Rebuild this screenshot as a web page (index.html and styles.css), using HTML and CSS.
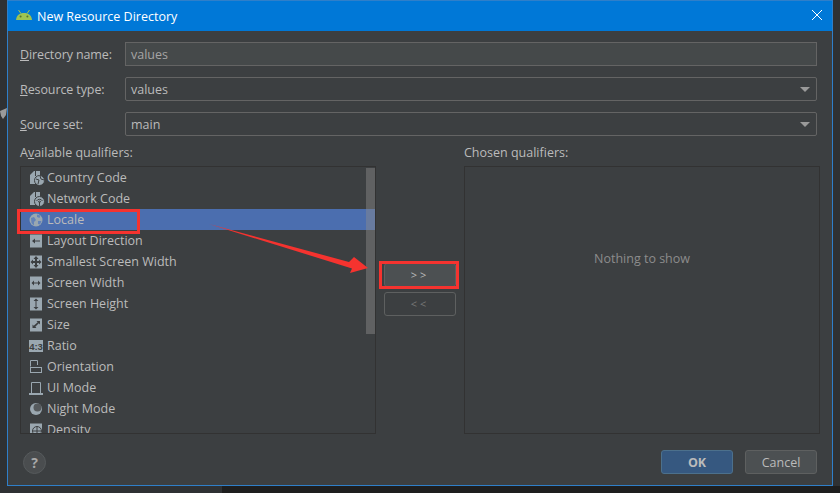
FILE: index.html
```html
<!DOCTYPE html>
<html lang="en">
<head>
    <meta charset="UTF-8">
    <meta name="viewport" content="width=device-width, initial-scale=1.0">
    <title>New Resource Directory</title>
    <link rel="stylesheet" href="styles.css">
</head>
<body>
    <!-- Bits of the desktop showing behind the dialog -->
    <div class="desk-dark"></div>
    <svg class="desk-cursor" width="8" height="12" viewBox="0 0 8 12">
        <path d="M0 3 L7 0 L6 7 L3 11 L1 8 Z" fill="#9a9a9a"/>
    </svg>

    <div class="dialog">
        <div class="titlebar">
            <svg class="android-icon" width="16" height="10" viewBox="0 0 16 10">
                <path d="M0 10 C0.3 5.500 3.500 3 8 3 C12.500 3 15.700 5.500 16 10 Z" fill="#9dc453"/>
                <path d="M2.500 0 L5 3.600 M13.500 0 L11 3.600" stroke="#9dc453" stroke-width="1"/>
                <circle cx="4.600" cy="6.500" r="1" fill="#55752c"/>
                <circle cx="11.400" cy="6.500" r="1" fill="#55752c"/>
            </svg>
            <span class="title">New Resource Directory</span>
            <svg class="close-icon" width="10" height="10" viewBox="0 0 10 10">
                <path d="M0 0 L10 10 M10 0 L0 10" stroke="#fff" stroke-width="1"/>
            </svg>
        </div>

        <div class="content">
            <div class="fields">
                <div class="field-row">
                    <label class="field-label"><u>D</u>irectory name:</label>
                    <div class="input">values</div>
                </div>
                <div class="field-row">
                    <label class="field-label"><u>R</u>esource type:</label>
                    <div class="select">values<span class="caret"></span></div>
                </div>
                <div class="field-row">
                    <label class="field-label"><u>S</u>ource set:</label>
                    <div class="select">main<span class="caret"></span></div>
                </div>
            </div>

            <div class="qualifiers">
                <div class="qualifier-col">
                    <div class="col-label">A<u>v</u>ailable qualifiers:</div>
                    <div class="list-box">
                        <ul class="list">
                            <li class="item">
                                <svg class="icon" viewBox="0 0 16 16"><path d="M1 5 L5 1 H11 V14 H1 Z" fill="#9aa7b0"/><path d="M6.500 1 V6" stroke="#3c3f41"/><circle cx="10.500" cy="10.500" r="5" fill="#9aa7b0" stroke="#3c3f41"/><path d="M7 9 L10 10 L9 14 M11 6 L12 9 L15 10" stroke="#3c3f41" fill="none"/></svg>
                                Country Code
                            </li>
                            <li class="item">
                                <svg class="icon" viewBox="0 0 16 16"><path d="M1 5 L5 1 H11 V14 H1 Z" fill="#9aa7b0"/><path d="M6.500 1 V6" stroke="#3c3f41"/><circle cx="10.500" cy="10.500" r="5" fill="#9aa7b0" stroke="#3c3f41"/><path d="M7.500 10 A3.500 3.500 0 0 1 13.500 10 M9 11 A2 2 0 0 1 12 11" stroke="#3c3f41" fill="none"/><path d="M10.500 11 V15" stroke="#3c3f41"/></svg>
                                Network Code
                            </li>
                            <li class="item selected">
                                <svg class="icon" viewBox="0 0 16 16"><circle cx="7" cy="8" r="6.500" fill="#9aa7b0"/><path d="M2 6 L5 5 L7 8 L5 10 L5 13.500 L2.500 11 Z M8 2.500 L11.500 3.500 L10.500 6 L8 5 Z M9 9 L12.500 9 L11 12.500 L9 12 Z" fill="#6483b8"/></svg>
                                Locale
                            </li>
                            <li class="item">
                                <svg class="icon" viewBox="0 0 16 16"><rect x="1" y="1.500" width="12" height="13" fill="#9aa7b0"/><path d="M3 8 L6 5.500 V7.500 H11 V8.500 H6 V10.500 Z" fill="#3c3f41"/></svg>
                                Layout Direction
                            </li>
                            <li class="item">
                                <svg class="icon" viewBox="0 0 16 16"><rect x="1" y="1.500" width="12" height="13" fill="#9aa7b0"/><path d="M7 2 L9.500 5 H8 V7 H10 V5.500 L12.500 8 L10 10.500 V9 H8 V11 H9.500 L7 14 L4.500 11 H6 V9 H4 V10.500 L1.500 8 L4 5.500 V7 H6 V5 H4.500 Z" fill="#3c3f41"/></svg>
                                Smallest Screen Width
                            </li>
                            <li class="item">
                                <svg class="icon" viewBox="0 0 16 16"><rect x="1" y="1.500" width="12" height="13" fill="#9aa7b0"/><path d="M2.500 8 L5 5.500 V7.500 H9 V5.500 L11.500 8 L9 10.500 V8.500 H5 V10.500 Z" fill="#3c3f41"/></svg>
                                Screen Width
                            </li>
                            <li class="item">
                                <svg class="icon" viewBox="0 0 16 16"><rect x="1" y="1.500" width="12" height="13" fill="#9aa7b0"/><path d="M7 2.500 L9.500 5 H7.500 V11 H9.500 L7 13.500 L4.500 11 H6.500 V5 H4.500 Z" fill="#3c3f41"/></svg>
                                Screen Height
                            </li>
                            <li class="item">
                                <svg class="icon" viewBox="0 0 16 16"><rect x="1" y="1.500" width="12" height="13" fill="#9aa7b0"/><path d="M7.500 4 H11 V7.500 L9.800 6.300 L6.300 9.800 L7.500 11 H3.500 V7.500 L4.700 8.700 L8.700 5.200 Z" fill="#3c3f41"/></svg>
                                Size
                            </li>
                            <li class="item">
                                <svg class="icon" viewBox="0 0 16 16"><rect x="0" y="2" width="14" height="12" fill="#9aa7b0"/><text class="ratio-text" x="7" y="11.500">4:3</text></svg>
                                Ratio
                            </li>
                            <li class="item">
                                <svg class="icon" viewBox="0 0 16 16"><path d="M1.500 7.500 V1.500 H8.500 V6" fill="none" stroke="#9aa7b0"/><rect x="1.500" y="8.500" width="11" height="5" fill="none" stroke="#9aa7b0"/></svg>
                                Orientation
                            </li>
                            <li class="item">
                                <svg class="icon" viewBox="0 0 16 16"><path d="M2.500 13 V2.500 H11.500 V13" fill="none" stroke="#9aa7b0"/><rect x="0" y="13" width="14" height="2" fill="#9aa7b0"/></svg>
                                UI Mode
                            </li>
                            <li class="item">
                                <svg class="icon" viewBox="0 0 16 16"><circle cx="7" cy="8" r="6" fill="#9aa7b0"/><circle cx="8.500" cy="6.500" r="4" fill="#565a5d"/></svg>
                                Night Mode
                            </li>
                            <li class="item">
                                <svg class="icon" viewBox="0 0 16 16"><rect x="1" y="1.500" width="12" height="13" fill="#9aa7b0"/><circle cx="8" cy="9" r="4.500" fill="none" stroke="#3c3f41"/><path d="M8 4.500 V13.500 M3.500 9 H12.500" stroke="#3c3f41"/></svg>
                                Density
                            </li>
                        </ul>
                        <div class="scrollbar"></div>
                    </div>
                </div>

                <div class="move-buttons">
                    <div class="move-btn">&gt;&gt;</div>
                    <div class="move-btn disabled">&lt;&lt;</div>
                </div>

                <div class="qualifier-col">
                    <div class="col-label">Chosen qualifiers:</div>
                    <div class="chosen-box">Nothing to show</div>
                </div>
            </div>

            <div class="footer">
                <div class="help">?</div>
                <div class="footer-buttons">
                    <div class="btn primary">OK</div>
                    <div class="btn">Cancel</div>
                </div>
            </div>
        </div>

        <!-- Red annotations on top of the screenshot -->
        <div class="mark mark-locale"></div>
        <div class="mark mark-button"></div>
        <svg class="arrow" width="160" height="50" viewBox="0 0 160 50">
            <path d="M0 0 L140 38 L145 33 L159 44 L141 49 L143 44.500 Z" fill="#f5332f"/>
        </svg>
    </div>
</body>
</html>
```

FILE: styles.css
```css
* {
    margin: 0;
    padding: 0;
    box-sizing: border-box;
}

html, body {
    height: 100%;
    width: 100%;
    overflow: hidden;
}

body {
    background-color: #2f3133;
    color: #bbbbbb;
    font-family: "Open Sans", "Noto Sans", sans-serif;
    font-size: 12.5px;
    padding-left: 7px;
}

u {
    text-underline-offset: 1px;
}

.desk-dark {
    position: absolute;
    left: 222px;
    right: 0;
    top: 486px;
    bottom: 0;
    background-color: #1e1e1e;
}

.desk-cursor {
    position: absolute;
    left: 0;
    top: 108px;
}

.dialog {
    position: relative;
    width: 826px;
    height: 486px;
    background-color: #3c3f41;
    border: 1px solid #2f7fc9;
    display: flex;
    flex-direction: column;
}

.titlebar {
    height: 30px;
    background-color: #0078d7;
    color: white;
    display: flex;
    align-items: center;
    padding: 0 10px 0 8px;
    flex-shrink: 0;
}

.android-icon {
    margin-right: 5px;
    margin-bottom: 3px;
}

.title {
    flex: 1;
}

.close-icon {
    margin-bottom: 2px;
}

.content {
    flex: 1;
    padding: 11px 12px 0;
    display: flex;
    flex-direction: column;
}

.fields {
    display: flex;
    flex-direction: column;
    gap: 11px;
    padding-right: 3px;
}

.field-row {
    display: flex;
    align-items: center;
    height: 24px;
}

.field-label {
    width: 105px;
    letter-spacing: -0.1px;
}

.input,
.select {
    flex: 1;
    height: 24px;
    border: 1px solid #646464;
    padding-left: 5px;
    line-height: 24px;
}

.input {
    background-color: #45494a;
    color: #a5a5a5;
}

.select {
    border-radius: 2px;
    position: relative;
}

.caret {
    position: absolute;
    right: 6px;
    top: 9px;
    border-left: 5px solid transparent;
    border-right: 5px solid transparent;
    border-top: 5px solid #9a9a9a;
}

.qualifiers {
    display: flex;
    margin-top: 10px;
    height: 288px;
}

.qualifier-col {
    width: 356px;
    display: flex;
    flex-direction: column;
}

.col-label {
    height: 20px;
    line-height: 14px;
}

.list-box {
    height: 268px;
    border: 1px solid #323232;
    position: relative;
    overflow: hidden;
}

.list {
    list-style: none;
}

.item {
    height: 21px;
    display: flex;
    align-items: center;
    padding-left: 8px;
    white-space: nowrap;
}

.item.selected {
    background-color: #4b6eaf;
}

.icon {
    width: 16px;
    height: 16px;
    margin-right: 2px;
    flex-shrink: 0;
}

.ratio-text {
    font-family: "Liberation Sans", sans-serif;
    font-size: 9.5px;
    font-weight: bold;
    text-anchor: middle;
    fill: #3c3f41;
}

.scrollbar {
    position: absolute;
    right: 0;
    top: 1px;
    width: 9px;
    height: 166px;
    background-color: rgba(140, 140, 140, 0.45);
}

.move-buttons {
    width: 88px;
    display: flex;
    flex-direction: column;
    align-items: center;
    gap: 5px;
    padding-top: 117px;
}

.move-btn {
    width: 72px;
    height: 24px;
    border: 1px solid #5e6060;
    border-radius: 3px;
    background-color: #4c5052;
    text-align: center;
    line-height: 22px;
    font-size: 11px;
    letter-spacing: 3px;
}

.move-btn.disabled {
    background-color: transparent;
    color: #777777;
}

.chosen-box {
    height: 268px;
    border: 1px solid #323232;
    display: flex;
    align-items: center;
    justify-content: center;
    color: #8c8c8c;
    padding-bottom: 84px;
}

.footer {
    display: flex;
    justify-content: space-between;
    align-items: center;
    margin-top: 16px;
    padding: 0 3px;
}

.help {
    width: 23px;
    height: 23px;
    border-radius: 50%;
    background-color: #4a4d4f;
    border: 1px solid #565a5c;
    text-align: center;
    line-height: 21px;
    font-weight: bold;
    font-size: 14px;
    color: #a8a8a8;
}

.footer-buttons {
    display: flex;
    gap: 12px;
}

.btn {
    width: 72px;
    height: 24px;
    border: 1px solid #5e6060;
    border-radius: 3px;
    background-color: #4c5052;
    text-align: center;
    line-height: 23px;
}

.btn.primary {
    background-color: #365880;
    border-color: #4c708c;
    font-weight: bold;
}

.mark {
    position: absolute;
    border: 3px solid #f5332f;
}

.mark-locale {
    left: 9px;
    top: 208px;
    width: 123px;
    height: 25px;
}

.mark-button {
    left: 371px;
    top: 260px;
    width: 80px;
    height: 28px;
}

.arrow {
    position: absolute;
    left: 201px;
    top: 223px;
}
```
